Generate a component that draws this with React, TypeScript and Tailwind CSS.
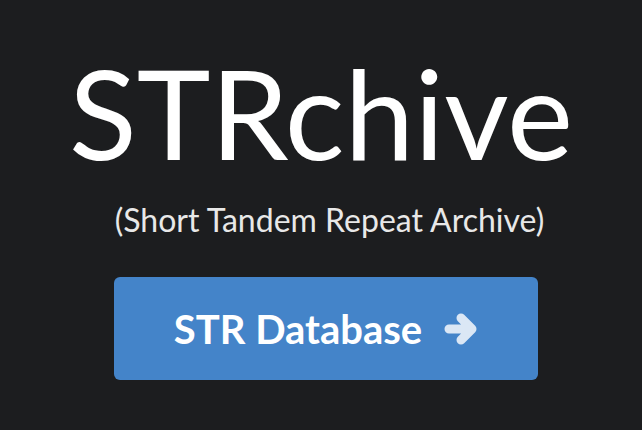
import React from 'react';

const App: React.FC = () => {
  return (
    <div className="w-[642px] h-[430px] bg-[#1c1d1f] flex flex-col items-center overflow-hidden" style={{ fontFamily: 'Lato, sans-serif' }}>
      <h1 className="mt-[42px] text-[125px] leading-[140px] text-white font-normal">STRchive</h1>
      <p className="mt-[18px] ml-[17px] text-[32px] leading-[40px] text-[#e8e8e8]">(Short Tandem Repeat Archive)</p>
      <button className="mt-[37px] ml-[10px] w-[424px] h-[103px] rounded-[6px] bg-[#4484c9] flex items-center justify-center gap-[22px]">
        <span className="text-[40px] font-bold text-white">STR Database</span>
        <svg width="34" height="34" viewBox="0 0 34 34" fill="none" stroke="#dbe7f5" strokeWidth="9" strokeLinecap="round" strokeLinejoin="round">
          <path d="M5 17H28M17 6l11 11-11 11" />
        </svg>
      </button>
    </div>
  );
};

export default App;
